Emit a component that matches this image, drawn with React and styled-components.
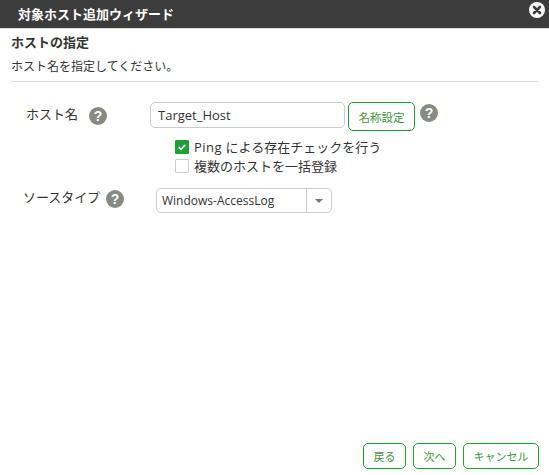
import React from 'react';
import styled, { createGlobalStyle } from 'styled-components';

const Global = createGlobalStyle`
html, body { margin: 0; padding: 0; background: #fff; }
body { font-family: "Open Sans", "Noto Sans CJK JP", sans-serif; color: #333; }
* { box-sizing: border-box; }
`;

const Help = ({ className }) => (
  <HelpCircle className={className}>?</HelpCircle>
);

const App = () => {
  return (
    <Wizard>
      <Global />
      <TitleBar>
        <Title>対象ホスト追加ウィザード</Title>
        <CloseIcon viewBox="0 0 16 16">
          <circle cx="8" cy="8" r="8" fill="#fff" />
          <path d="M5 5l6 6M11 5l-6 6" stroke="#3c3c3c" strokeWidth="2.6" strokeLinecap="round" />
        </CloseIcon>
      </TitleBar>
      <Body>
        <Heading>ホストの指定</Heading>
        <Description>ホスト名を指定してください。</Description>
        <Form>
          <HostRow>
            <HostLabel>ホスト名</HostLabel>
            <HostHelp />
            <HostInput readOnly value="Target_Host" />
            <NameButton>名称設定</NameButton>
            <NameHelp />
          </HostRow>
          <Checks>
            <CheckRow>
              <CheckBox $checked>
                <svg viewBox="0 0 12 12" width="10" height="10">
                  <path d="M2 6.2l2.8 2.6L10 3.4" fill="none" stroke="#fff" strokeWidth="2" />
                </svg>
              </CheckBox>
              <span><PingText>Ping</PingText> による存在チェックを行う</span>
            </CheckRow>
            <CheckRow>
              <CheckBox />
              <span>複数のホストを一括登録</span>
            </CheckRow>
          </Checks>
          <SourceRow>
            <SourceLabel>ソースタイプ</SourceLabel>
            <SourceHelp />
            <Select>
              <SelectValue>Windows-AccessLog</SelectValue>
              <SelectArrow><span /></SelectArrow>
            </Select>
          </SourceRow>
        </Form>
      </Body>
      <Footer>
        <FooterButton $width={43}>戻る</FooterButton>
        <FooterButton $width={43}>次へ</FooterButton>
        <FooterButton $width={76}>キャンセル</FooterButton>
      </Footer>
    </Wizard>
  );
};

export default App;

const Wizard = styled.div`
width: 549px;
height: 475px;
display: flex;
flex-direction: column;
overflow: hidden;
background: #fff;
`;

const TitleBar = styled.div`
height: 29px;
flex-shrink: 0;
background: #3c3c3c;
border-bottom: 1px solid #ddd;
display: flex;
align-items: center;
justify-content: space-between;
padding: 0 4px 2px 18px;
`;

const Title = styled.div`
color: #fff;
font-size: 13px;
font-weight: 700;
`;

const CloseIcon = styled.svg`
width: 16px;
height: 16px;
margin-top: -6px;
`;

const Body = styled.div`
flex: 1;
padding: 3px 11px 0;
`;

const Heading = styled.div`
font-size: 13px;
font-weight: 700;
line-height: 20px;
color: #333;
`;

const Description = styled.div`
font-size: 12px;
line-height: 18px;
margin-top: 6px;
padding-bottom: 5px;
border-bottom: 1px solid #ddd;
`;

const Form = styled.div`
padding-top: 20px;
`;

const HostRow = styled.div`
display: flex;
align-items: flex-start;
padding-left: 15px;
`;

const HostLabel = styled.div`
font-size: 13px;
line-height: 24px;
width: 53px;
`;

const HelpCircle = styled.div`
width: 18px;
height: 18px;
border-radius: 50%;
background: #868b83;
color: #fff;
font-family: "Liberation Sans", sans-serif;
font-size: 14px;
font-weight: 700;
line-height: 18px;
text-align: center;
flex-shrink: 0;
`;

const HostHelp = styled(Help)`
margin: 5px 0 0 10px;
`;

const HostInput = styled.input`
width: 195px;
height: 26px;
margin-left: 43px;
padding: 0 7px;
border: 1px solid #ccc;
border-radius: 5px;
font-family: "Open Sans", sans-serif;
font-size: 13px;
color: #333;
outline: none;
`;

const NameButton = styled.button`
width: 67px;
height: 29px;
margin-left: 3px;
background: #fff;
border: 1.5px solid #18a335;
border-radius: 5px;
color: #3a9a3a;
font-family: "Noto Sans CJK JP", sans-serif;
font-size: 11.5px;
padding: 0;
`;

const NameHelp = styled(Help)`
margin: 2px 0 0 5px;
`;

const Checks = styled.div`
padding: 6px 0 0 164px;
`;

const CheckRow = styled.div`
display: flex;
align-items: center;
gap: 5px;
height: 19px;
font-size: 13px;
color: #333;
`;

const PingText = styled.span`
letter-spacing: 0.5px;
`;

const CheckBox = styled.span`
width: 14px;
height: 14px;
border-radius: 1px;
display: flex;
align-items: center;
justify-content: center;
background: ${(props) => (props.$checked ? '#18a335' : '#fff')};
border: 1px solid ${(props) => (props.$checked ? '#18a335' : '#ccc')};
`;

const SourceRow = styled.div`
display: flex;
align-items: flex-start;
padding: 13px 0 0 12px;
`;

const SourceLabel = styled.div`
font-size: 13px;
line-height: 19px;
width: 78px;
`;

const SourceHelp = styled(Help)`
margin: 2px 0 0 5px;
`;

const Select = styled.div`
width: 176px;
height: 25px;
margin-left: 32px;
border: 1px solid #ccc;
border-radius: 5px;
display: flex;
align-items: center;
`;

const SelectValue = styled.div`
flex: 1;
padding-left: 5px;
font-size: 12px;
color: #333;
`;

const SelectArrow = styled.div`
width: 25px;
height: 100%;
border-left: 1px solid #ccc;
display: flex;
align-items: center;
justify-content: center;
span {
  width: 0;
  height: 0;
  border-left: 4px solid transparent;
  border-right: 4px solid transparent;
  border-top: 4px solid #777;
}
`;

const Footer = styled.div`
display: flex;
justify-content: flex-end;
gap: 7px;
padding: 0 10px 6px 0;
`;

const FooterButton = styled.button`
width: ${(props) => props.$width}px;
height: 26px;
background: #fff;
border: 1.5px solid #18a335;
border-radius: 5px;
color: #3a9a3a;
font-family: "Noto Sans CJK JP", sans-serif;
font-size: 11px;
padding: 0;
`;
